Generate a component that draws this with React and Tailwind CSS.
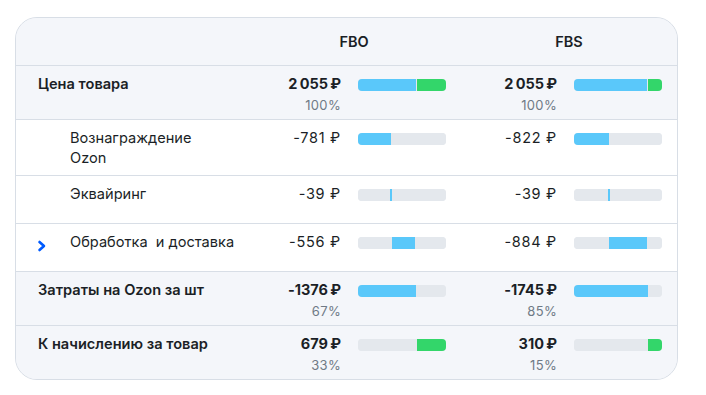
import React from "react";

function Bar({ segs }) {
  return (
    <div className="flex h-[12px] w-[88px] overflow-hidden rounded-[4px] bg-[#e4e8ed] gap-px mt-[5px]">
      {segs.map((s, i) => (
        <div
          key={i}
          className={
            s.c === "blue"
              ? "h-full bg-[#5ac8fa]"
              : s.c === "green"
              ? "h-full bg-[#33d66a]"
              : "h-full bg-[#e4e8ed]"
          }
          style={{ width: s.w + "px", flex: s.grow ? "1 1 0" : "none" }}
        />
      ))}
    </div>
  );
}

function Value({ v, p, bold }) {
  return (
    <div className="w-[100px] text-right">
      <div
        className={
          bold
            ? "h-5 whitespace-nowrap leading-5 text-[14.5px] text-[#1b1f26] font-bold tracking-wide"
            : "h-5 whitespace-nowrap leading-5 text-[14.5px] text-[#1b1f26] font-normal tracking-wider"
        }
      >
        {v}
      </div>
      {p && (
        <div className="mt-px h-5 leading-5 text-[13px] tracking-wide text-[#6f7a86]">
          {p}
        </div>
      )}
    </div>
  );
}

function Row({ label, indent, bold, bg, h, fbo, fbs, chevron, last }) {
  return (
    <div
      className={
        "relative flex items-start pt-2 " +
        h +
        " " +
        (bg ? "bg-[#f4f6fa] " : "bg-white ") +
        (last ? "" : "border-b border-[#d8dee6]")
      }
    >
      {chevron && (
        <svg
          className="absolute left-[21px] top-[16px]"
          width="10"
          height="12"
          viewBox="0 0 10 12"
        >
          <polyline
            points="2.5,2 7,6 2.5,10"
            fill="none"
            stroke="#005bff"
            strokeWidth="2.6"
            strokeLinecap="round"
            strokeLinejoin="round"
          />
        </svg>
      )}
      <div
        className={
          "flex-1 leading-5 text-[14.6px] text-[#1b1f26] " +
          (indent ? "pl-[54px] " : "pl-[22px] ") +
          (bold ? "font-semibold" : "font-normal")
        }
      >
        {label}
      </div>
      <Value v={fbo.v} p={fbo.p} bold={bold} />
      <div className="ml-[17px]">
        <Bar segs={fbo.segs} />
      </div>
      <div className="ml-[11px]">
        <Value v={fbs.v} p={fbs.p} bold={bold} />
      </div>
      <div className="ml-[17px] mr-[15px]">
        <Bar segs={fbs.segs} />
      </div>
    </div>
  );
}

const seg = (arr) =>
  arr.map(([w, c], i) => ({ w, c, grow: i === arr.length - 1 }));

const N = "\u202F";
const S = "\u00A0";

export default function App() {
  return (
    <div
      className="min-h-screen bg-white pt-[17px] pl-[15px]"
      style={{ fontFamily: "Inter, 'Noto Sans', sans-serif" }}
    >
      <div className="w-[663px] overflow-hidden rounded-[22px] border border-[#d8dee6] bg-[#f4f6fa]">
        <div className="flex h-[48px] items-center border-b border-[#d8dee6] bg-[#f4f6fa] text-[14.5px] font-semibold text-[#1b1f26]">
          <div className="flex-1" />
          <div className="w-[205px] pl-[21px] text-center">FBO</div>
          <div className="w-[231px] pl-[30px] pr-[15px] text-center">FBS</div>
        </div>
        <Row
          label="Цена товара"
          bold
          bg
          h="h-[54px]"
          fbo={{ v: `2${N}055${N}₽`, p: "100%", segs: seg([[58, "blue"], [0, "green"]]) }}
          fbs={{ v: `2${N}055${N}₽`, p: "100%", segs: seg([[73, "blue"], [0, "green"]]) }}
        />
        <Row
          label={
            <>
              Вознаграждение
              <br />
              Ozon
            </>
          }
          indent
          h="h-[56px]"
          fbo={{ v: `-781${S}₽`, segs: seg([[33, "blue"], [0, "gray"]]) }}
          fbs={{ v: `-822${S}₽`, segs: seg([[35, "blue"], [0, "gray"]]) }}
        />
        <Row
          label="Эквайринг"
          indent
          h="h-[48px]"
          fbo={{ v: `-39${S}₽`, segs: seg([[31, "gray"], [2, "blue"], [0, "gray"]]) }}
          fbs={{ v: `-39${S}₽`, segs: seg([[33, "gray"], [2, "blue"], [0, "gray"]]) }}
        />
        <Row
          label={"Обработка\u00a0 и доставка"}
          indent
          chevron
          h="h-[48px]"
          fbo={{ v: `-556${S}₽`, segs: seg([[33, "gray"], [23, "blue"], [0, "gray"]]) }}
          fbs={{ v: `-884${S}₽`, segs: seg([[34, "gray"], [38, "blue"], [0, "gray"]]) }}
        />
        <Row
          label="Затраты на Ozon за шт"
          bold
          bg
          h="h-[54px]"
          fbo={{ v: `-1376${N}₽`, p: "67%", segs: seg([[58, "blue"], [0, "gray"]]) }}
          fbs={{ v: `-1745${N}₽`, p: "85%", segs: seg([[74, "blue"], [0, "gray"]]) }}
        />
        <Row
          label="К начислению за товар"
          bold
          bg
          last
          h="h-[53px]"
          fbo={{ v: `679${N}₽`, p: "33%", segs: seg([[58, "gray"], [0, "green"]]) }}
          fbs={{ v: `310${N}₽`, p: "15%", segs: seg([[73, "gray"], [0, "green"]]) }}
        />
      </div>
    </div>
  );
}
